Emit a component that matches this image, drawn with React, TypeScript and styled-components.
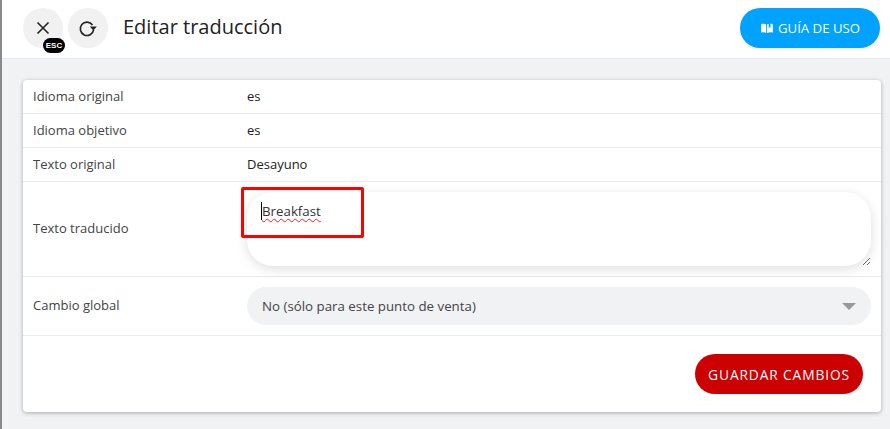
import React from "react";
import styled, { createGlobalStyle } from "styled-components";

const Global = createGlobalStyle`
  html, body { margin: 0; padding: 0; height: 100%; overflow: hidden; }
  body { font-family: "Open Sans", "Noto Sans", sans-serif; background: #eff0f2; color: #333; }
`;

const Page = styled.div`
  width: 890px;
  height: 429px;
  display: flex;
  flex-direction: column;
  box-sizing: border-box;
  border-left: 2px solid #8a8a8a;
  background: linear-gradient(#eceef0, #f1f2f4 30px);
`;

const Header = styled.header`
  height: 59px;
  box-sizing: border-box;
  flex: none;
  background: #fff;
  border-bottom: 1px solid #e9eaec;
  display: flex;
  align-items: center;
  padding: 0 10px 5px 21px;
  gap: 5px;
`;

const RoundButton = styled.button`
  position: relative;
  width: 40px;
  height: 40px;
  padding: 0;
  border: 0;
  border-radius: 50%;
  background: #f1f1f1;
  color: #222;
  display: flex;
  align-items: center;
  justify-content: center;
  top: 1px;
`;

const EscBadge = styled.span`
  position: absolute;
  left: 20px;
  top: 30px;
  width: 22px;
  height: 15px;
  border-radius: 8px;
  background: #000;
  color: #fff;
  font-size: 8px;
  font-weight: 800;
  line-height: 15px;
  text-align: center;
`;

const Title = styled.h1`
  margin: 0 0 0 10px;
  flex: 1;
  font-size: 20px;
  font-weight: 400;
  color: #222;
`;

const GuideButton = styled.button`
  position: relative;
  top: 1px;
  width: 140px;
  height: 40px;
  border: 0;
  border-radius: 20px;
  background: #00a2ff;
  color: #fff;
  font-family: inherit;
  font-size: 13.2px;
  display: flex;
  align-items: center;
  justify-content: center;
  gap: 5px;
  padding: 0 0 0 1px;
`;

const Content = styled.main`
  flex: 1;
  padding: 21px 9px 0 21px;
`;

const Card = styled.section`
  height: 332px;
  background: #fff;
  border-radius: 4px;
  box-shadow: 0 1px 4px rgba(0, 0, 0, 0.3);
  display: flex;
  flex-direction: column;
`;

const Row = styled.div<{ $h: number }>`
  height: ${(p) => p.$h}px;
  box-sizing: border-box;
  flex: none;
  display: grid;
  grid-template-columns: 214px 1fr;
  align-items: center;
  padding: 0 10px;
  border-bottom: 1px solid #e9eaec;
  font-size: 13px;
`;

const Label = styled.span`
  color: #444;
  position: relative;
  top: -1px;
`;

const Value = styled.span`
  color: #222;
  position: relative;
  top: -1px;
`;

const TextArea = styled.div`
  position: relative;
  height: 74px;
  border-radius: 26px;
  background: #fff;
  box-shadow: 0 3px 12px rgba(0, 0, 0, 0.13);
  box-sizing: border-box;
  padding: 10px 15px;
  font-size: 13.3px;
  line-height: 19px;
  color: #333;
`;

const Word = styled.span`
  position: relative;
  border-left: 1px solid #000;
  margin-left: -1px;
  text-decoration: underline wavy #f02020 1px;
  text-underline-offset: 2px;
`;

const Highlight = styled.div`
  position: absolute;
  left: -6px;
  top: -5px;
  width: 123px;
  height: 51px;
  border: 3px solid #ff0000;
  border-radius: 2px;
  box-sizing: border-box;
`;

const Grip = styled.svg`
  position: absolute;
  right: 0;
  bottom: 0;
`;

const SelectBox = styled.div`
  height: 38px;
  border-radius: 19px;
  background: #f1f2f4;
  display: flex;
  align-items: center;
  justify-content: space-between;
  padding: 0 15px;
  color: #444;
  font-size: 13.3px;
`;

const Caret = styled.span`
  width: 0;
  height: 0;
  border-left: 7px solid transparent;
  border-right: 7px solid transparent;
  border-top: 7px solid #999;
`;

const Footer = styled.div`
  flex: 1;
  display: flex;
  justify-content: flex-end;
  align-items: flex-start;
  padding: 18px 18px 0 0;
`;

const SaveButton = styled.button`
  width: 168px;
  height: 40px;
  border: 0;
  border-radius: 20px;
  background: #cc0000;
  color: #fff;
  font-family: inherit;
  font-size: 13.8px;
  letter-spacing: 0.85px;
  padding: 0;
`;

export default function App() {
  return (
    <Page>
      <Global />
      <Header>
        <RoundButton aria-label="Cerrar">
          <svg width="14" height="14" viewBox="0 0 14 14" fill="none" stroke="#222" strokeWidth="1.6">
            <path d="M1.5 1.5l11 11M12.5 1.500l-11 11" />
          </svg>
          <EscBadge>ESC</EscBadge>
        </RoundButton>
        <RoundButton aria-label="Recargar">
          <svg width="20" height="20" viewBox="0 0 20 20" fill="none" stroke="#222" strokeWidth="1.6">
            <path d="M14.500 7A6.700 6.700 0 1 0 15.600 11.800" />
            <path d="M11.800 8.500h7l-3.500 4z" fill="#222" stroke="none" />
          </svg>
        </RoundButton>
        <Title>Editar traducción</Title>
        <GuideButton>
          <svg width="12" height="10" viewBox="0 0 14 12" fill="#fff">
            <path d="M0 1.500c2-.8 4-.8 6 .3V12c-2-1-4-1-6-.3zM7 1.800c.6-.3 1.300-.6 2-.7v5l1.200-1 1 1V1c1-.1 1.900.1 2.800.5v10.200c-2-.7-4-.7-7 .3z" />
          </svg>
          GUÍA DE USO
        </GuideButton>
      </Header>
      <Content>
        <Card>
          <Row $h={34}><Label>Idioma original</Label><Value>es</Value></Row>
          <Row $h={34}><Label>Idioma objetivo</Label><Value>es</Value></Row>
          <Row $h={34}><Label>Texto original</Label><Value>Desayuno</Value></Row>
          <Row $h={95}>
            <Label>Texto traducido</Label>
            <TextArea>
              <Word>Breakfast</Word>
              <Highlight />
              <Grip width="10" height="10" viewBox="0 0 10 10" stroke="#666" strokeWidth="1">
                <path d="M2 9l7-7M6 9l3-3" />
              </Grip>
            </TextArea>
          </Row>
          <Row $h={59}>
            <Label>Cambio global</Label>
            <SelectBox>
              No (sólo para este punto de venta)
              <Caret />
            </SelectBox>
          </Row>
          <Footer>
            <SaveButton>GUARDAR CAMBIOS</SaveButton>
          </Footer>
        </Card>
      </Content>
    </Page>
  );
}
